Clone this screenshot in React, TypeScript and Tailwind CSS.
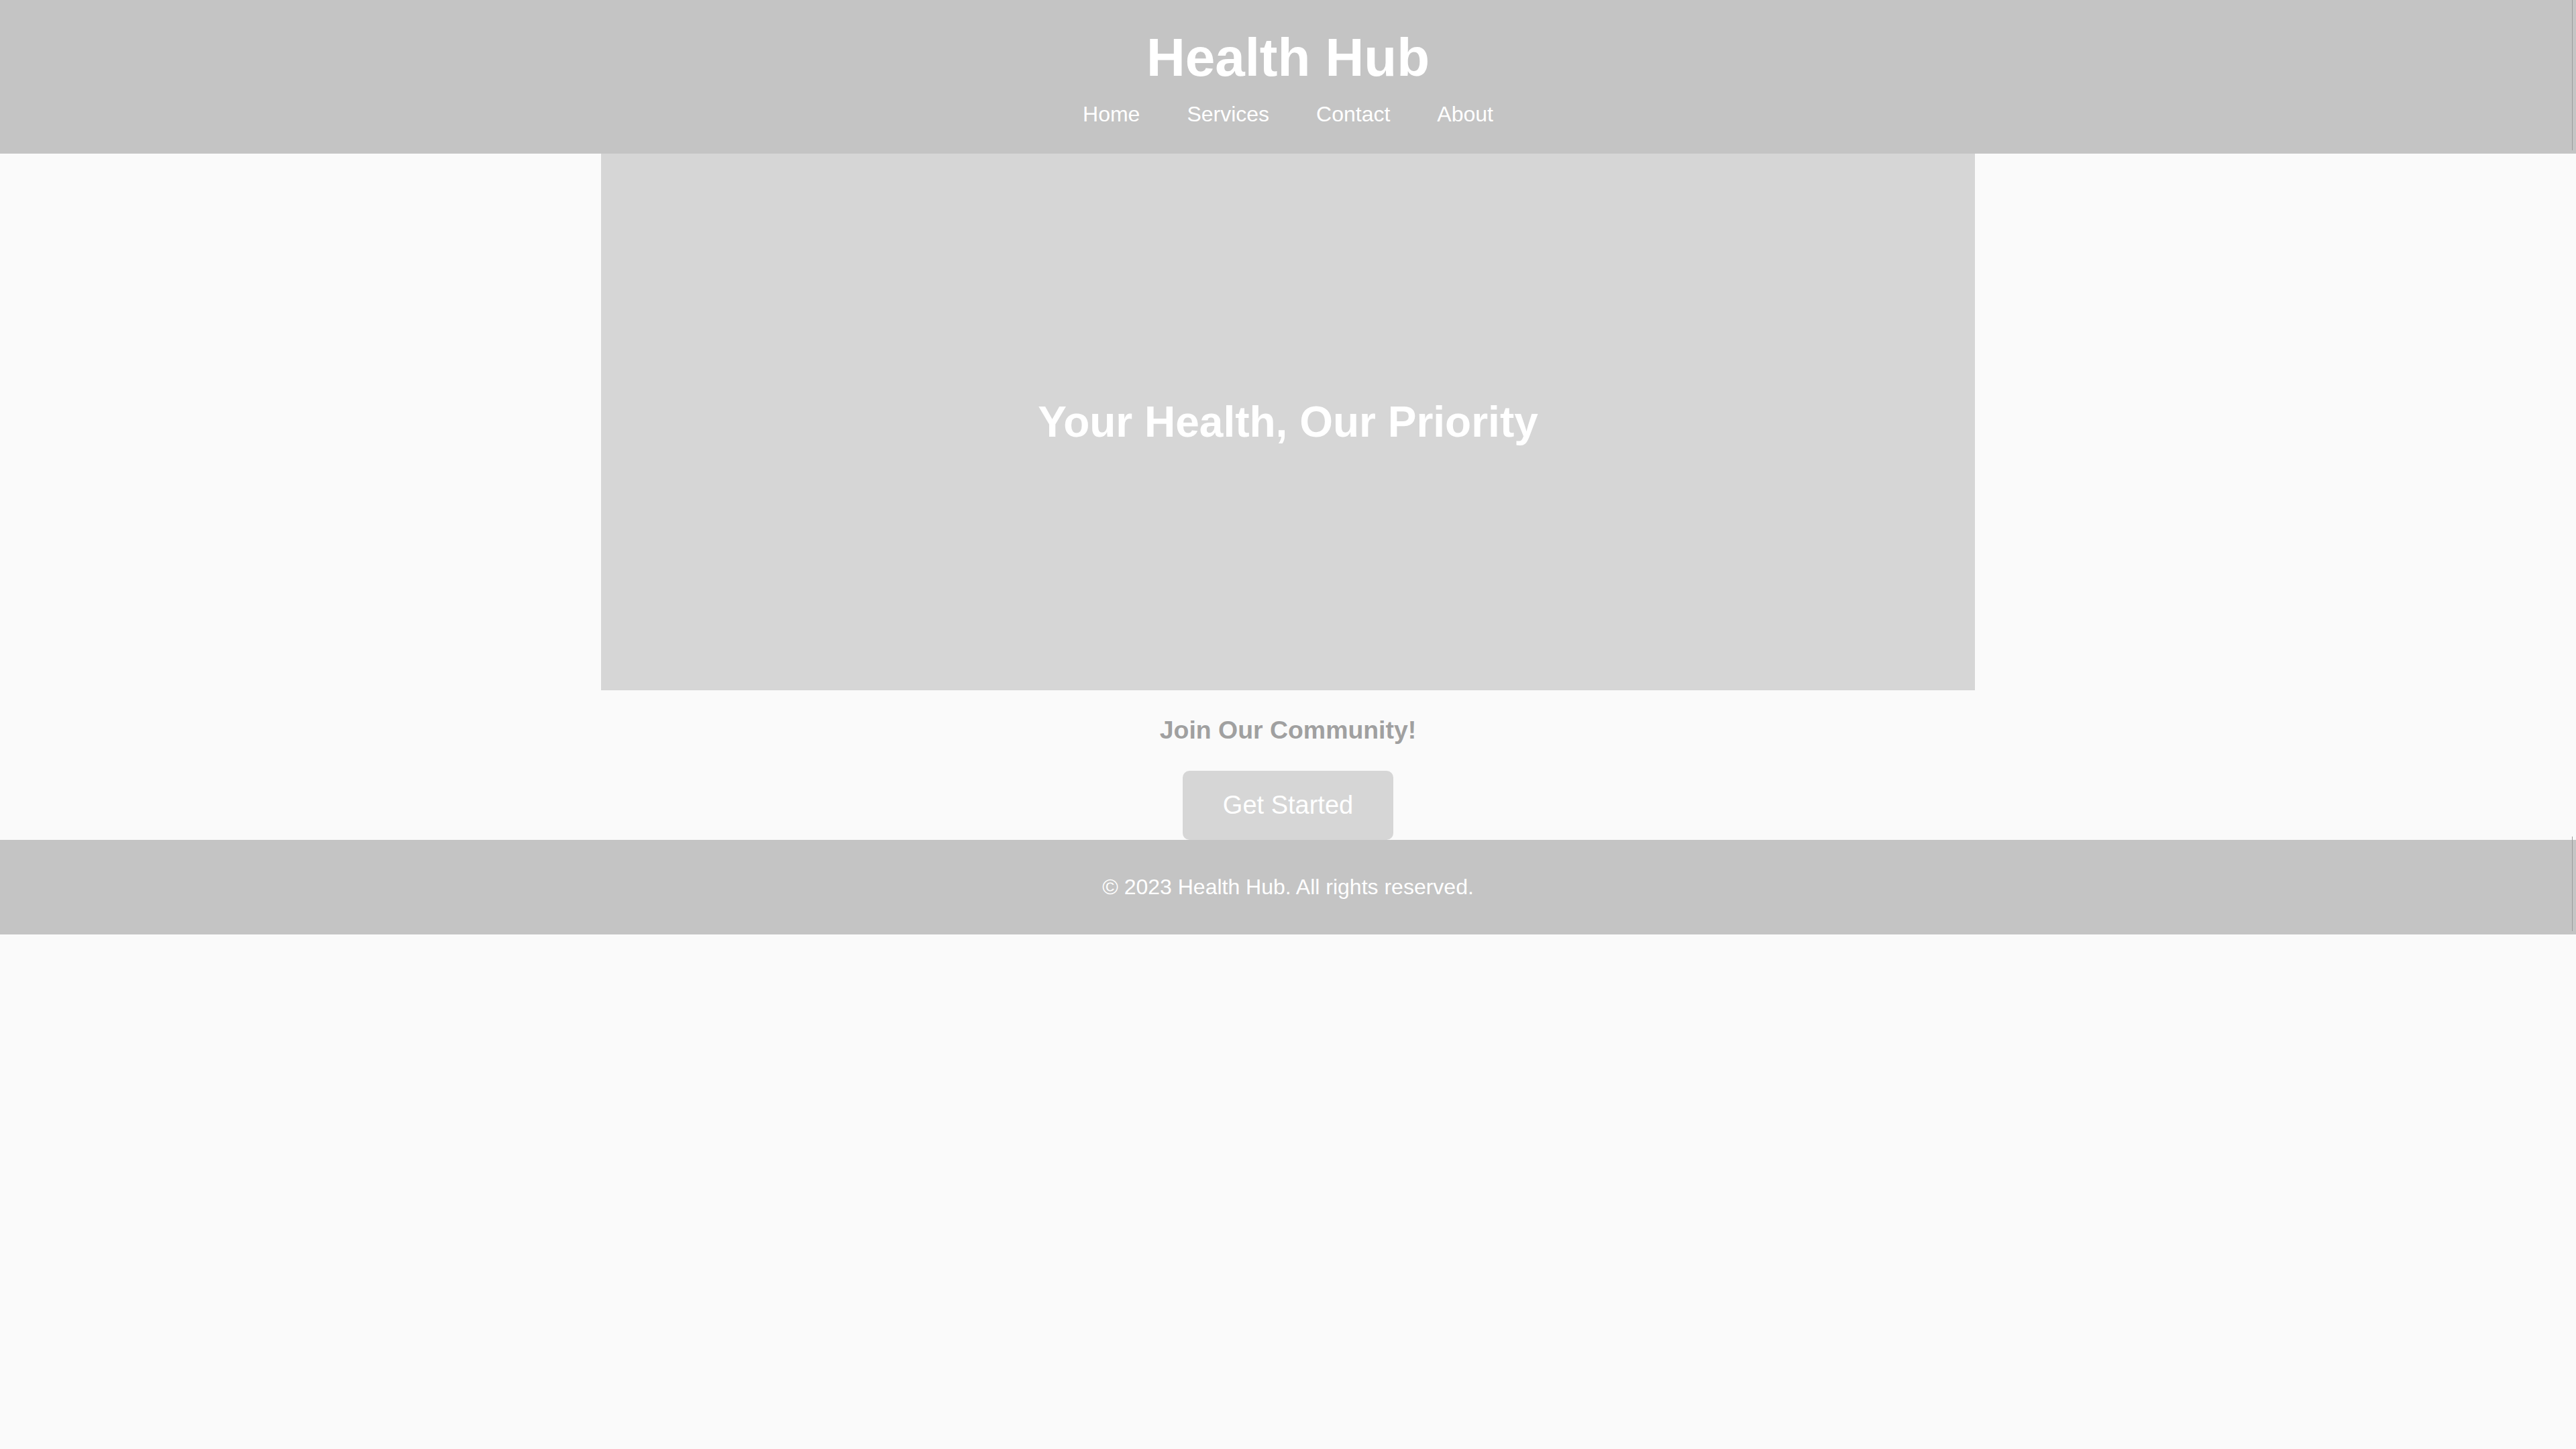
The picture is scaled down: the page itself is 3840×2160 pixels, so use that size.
export default function App() {
  return (
    <div className="min-h-screen bg-[#fafafa] font-['Liberation_Sans',Arial,sans-serif]">
      <header className="relative bg-[#c4c4c4] py-[40px] text-center text-white">
        <h1 className="mb-[20px] text-[80px] font-bold leading-[normal]">Health Hub</h1>
        <nav className="flex justify-center gap-[70px] text-[32px] leading-[normal]">
          <a href="#">Home</a>
          <a href="#">Services</a>
          <a href="#">Contact</a>
          <a href="#">About</a>
        </nav>
        <span className="absolute right-[5px] top-0 bottom-[5px] w-px bg-[#9c9c9c]" />
      </header>
      <main className="flex flex-col items-center">
        <section className="flex h-[800px] w-[2048px] items-center justify-center bg-[#d6d6d6]">
          <h2 className="text-[64px] font-bold leading-[normal] text-white">Your Health, Our Priority</h2>
        </section>
        <h3 className="mt-[37.5px] mb-[39.5px] text-[37.44px] font-bold leading-[normal] text-[#a0a0a0]">
          Join Our Community!
        </h3>
        <button className="rounded-[10px] bg-[#d6d6d6] px-[60px] py-[30px] text-[38px] leading-[normal] text-white">
          Get Started
        </button>
      </main>
      <footer className="relative bg-[#c4c4c4] py-[52px] text-center text-[32px] leading-[normal] text-white">
        <p>© 2023 Health Hub. All rights reserved.</p>
        <span className="absolute right-[5px] top-[-5px] bottom-[5px] w-px bg-[#9c9c9c]" />
      </footer>
    </div>
  );
}
